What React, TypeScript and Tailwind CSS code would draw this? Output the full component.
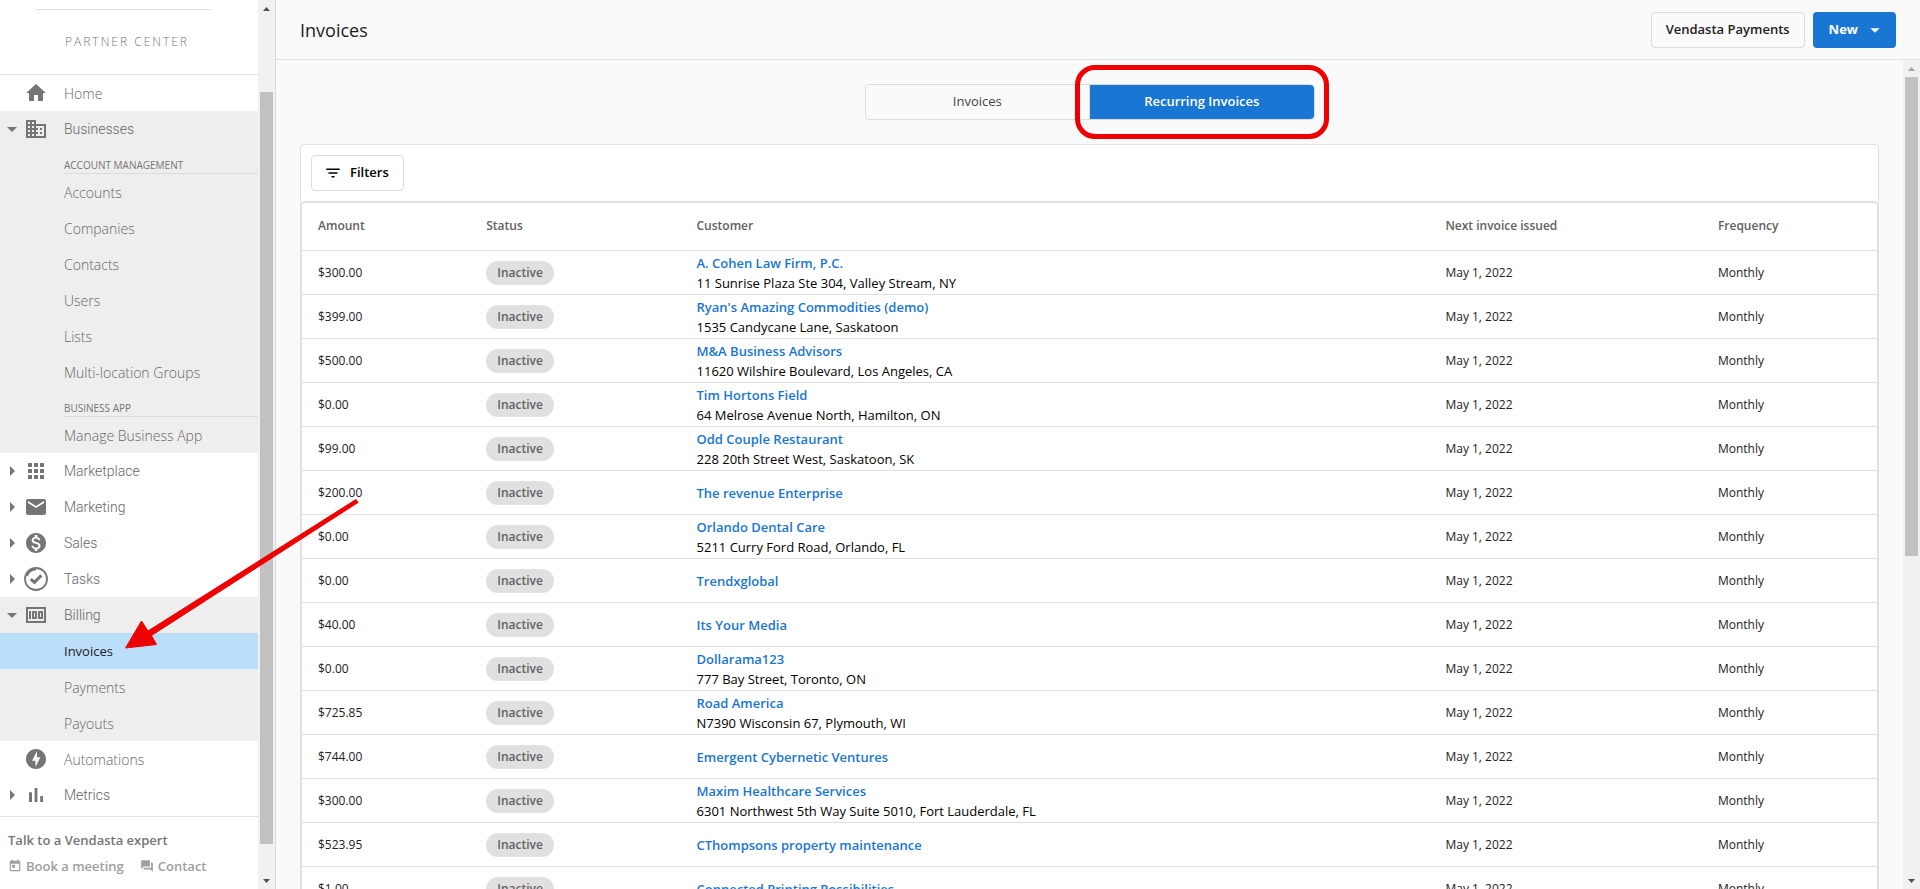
import type { ReactNode } from "react";
import {
  MdApps,
  MdArrowDropDown,
  MdArrowRight,
  MdDomain,
  MdFilterList,
  MdForum,
  MdHome,
  MdMail,
  MdMoney,
  MdMonetizationOn,
  MdOfflineBolt,
  MdToday,
} from "react-icons/md";

type Invoice = { amount: string; name: string; address?: string };

const invoices: Invoice[] = [
  { amount: "$300.00", name: "A. Cohen Law Firm, P.C.", address: "11 Sunrise Plaza Ste 304, Valley Stream, NY" },
  { amount: "$399.00", name: "Ryan's Amazing Commodities (demo)", address: "1535 Candycane Lane, Saskatoon" },
  { amount: "$500.00", name: "M&A Business Advisors", address: "11620 Wilshire Boulevard, Los Angeles, CA" },
  { amount: "$0.00", name: "Tim Hortons Field", address: "64 Melrose Avenue North, Hamilton, ON" },
  { amount: "$99.00", name: "Odd Couple Restaurant", address: "228 20th Street West, Saskatoon, SK" },
  { amount: "$200.00", name: "The revenue Enterprise" },
  { amount: "$0.00", name: "Orlando Dental Care", address: "5211 Curry Ford Road, Orlando, FL" },
  { amount: "$0.00", name: "Trendxglobal" },
  { amount: "$40.00", name: "Its Your Media" },
  { amount: "$0.00", name: "Dollarama123", address: "777 Bay Street, Toronto, ON" },
  { amount: "$725.85", name: "Road America", address: "N7390 Wisconsin 67, Plymouth, WI" },
  { amount: "$744.00", name: "Emergent Cybernetic Ventures" },
  { amount: "$300.00", name: "Maxim Healthcare Services", address: "6301 Northwest 5th Way Suite 5010, Fort Lauderdale, FL" },
  { amount: "$523.95", name: "CThompsons property maintenance" },
  { amount: "$1.00", name: "Connected Printing Possibilities" },
];

function TasksIcon() {
  return (
    <svg viewBox="0 0 24 24" className="size-6" fill="none" stroke="currentColor">
      <circle cx="12" cy="12" r="11" strokeWidth="1.8" />
      <path d="M12 2.6 A9.4 9.4 0 0 0 3 9" strokeWidth="2" />
      <path d="M6.8 12.2 L10.4 15.4 L17.4 8.4" strokeWidth="3" />
    </svg>
  );
}

function MetricsIcon() {
  return (
    <svg viewBox="0 0 24 24" className="size-6" fill="currentColor">
      <path d="M5 9.2h3V19H5zM10.6 5h2.8v14h-2.8zm5.6 8H19v6h-2.8z" />
    </svg>
  );
}

function NavGroup({ icon, label, open, plain }: { icon: ReactNode; label: string; open?: boolean; plain?: boolean }) {
  const body = (
    <>
      <span className="flex w-6 justify-center">
        {plain ? null : open ? <MdArrowDropDown className="size-6 shrink-0" /> : <MdArrowRight className="size-6 shrink-0" />}
      </span>
      <span className="flex size-6 items-center justify-center">{icon}</span>
    </>
  );
  if (plain) {
    return (
      <a href="#" className="flex h-9 items-center text-sm font-light">
        {body}
        <span className="pt-0.5 pl-4 text-[#666666]">{label}</span>
      </a>
    );
  }
  return (
    <button type="button" className="flex h-9 w-full items-center text-left font-[Roboto,sans-serif] text-sm font-light">
      {body}
      <span className="pl-4 text-[#666666]">{label}</span>
    </button>
  );
}

function SubItem({ label, active }: { label: string; active?: boolean }) {
  return (
    <a
      href="#"
      className={
        active
          ? "flex h-9 items-center bg-[#bbdefb] pt-0.5 pl-16 text-[13px] text-[#212121]"
          : "flex h-9 items-center pt-0.5 pl-16 text-sm font-light text-[#666666]"
      }
    >
      {label}
    </a>
  );
}

function SubHeading({ children }: { children: ReactNode }) {
  return (
    <h3 className="ml-16 flex h-[27px] items-end border-b border-[#dcdcdc] text-[10px] leading-4 uppercase">{children}</h3>
  );
}

function ScrollArrow({ down, muted }: { down?: boolean; muted?: boolean }) {
  return (
    <span className={muted ? "flex h-[17px] shrink-0 items-center text-[#a3a3a3]" : "flex h-[17px] shrink-0 items-center text-[#505050]"}>
      <svg viewBox="0 0 7 4" className="h-1 w-[7px]" fill="currentColor">
        <path d={down ? "M0 0H7L3.500 4z" : "M0 4H7L3.500 0z"} />
      </svg>
    </span>
  );
}

function Sidebar() {
  return (
    <aside className="flex h-full w-[276px] shrink-0 border-r border-[#dadada] bg-white text-[#757575]">
      <div className="flex min-w-0 flex-1 flex-col overflow-hidden">
        <div className="flex h-[75px] shrink-0 flex-col items-center border-b border-[#e0e0e0] pt-[9px] pr-3">
          <div className="w-[175px] border-t border-[#e0e0e0]" />
          <span className="pt-6 pl-2 text-xs leading-4 font-light tracking-[2px]">PARTNER CENTER</span>
        </div>
        <nav className="shrink-0">
          <NavGroup plain icon={<MdHome className="size-6" />} label="Home" />
          <div className="bg-[#eeeeee]">
            <NavGroup open icon={<MdDomain className="size-6" />} label="Businesses" />
            <SubHeading>Account Management</SubHeading>
            <SubItem label="Accounts" />
            <SubItem label="Companies" />
            <SubItem label="Contacts" />
            <SubItem label="Users" />
            <SubItem label="Lists" />
            <SubItem label="Multi-location Groups" />
            <SubHeading>Business App</SubHeading>
            <SubItem label="Manage Business App" />
          </div>
          <NavGroup icon={<MdApps className="size-6" />} label="Marketplace" />
          <NavGroup icon={<MdMail className="size-6" />} label="Marketing" />
          <NavGroup icon={<MdMonetizationOn className="size-6" />} label="Sales" />
          <NavGroup icon={<TasksIcon />} label="Tasks" />
          <div className="bg-[#eeeeee]">
            <NavGroup open icon={<MdMoney className="size-6" />} label="Billing" />
            <SubItem label="Invoices" active />
            <SubItem label="Payments" />
            <SubItem label="Payouts" />
          </div>
          <NavGroup plain icon={<MdOfflineBolt className="size-6" />} label="Automations" />
          <NavGroup icon={<MetricsIcon />} label="Metrics" />
        </nav>
        <footer className="mt-[3px] flex-1 border-t border-[#e0e0e0] px-2 pt-[13px] text-[13px] font-semibold">
          <p className="leading-5">Talk to a Vendasta expert</p>
          <div className="flex gap-4 pt-1.5 leading-5 text-[#9e9e9e]">
            <a href="#" className="flex items-center gap-1">
              <MdToday className="size-3.5" />
              Book a meeting
            </a>
            <a href="#" className="flex items-center gap-1">
              <MdForum className="size-3.5" />
              Contact
            </a>
          </div>
        </footer>
      </div>
      <div className="flex w-[17px] shrink-0 flex-col items-center bg-[#f1f1f1]">
        <ScrollArrow />
        <div className="flex min-h-0 flex-1 flex-col items-center pt-[75px] pb-7">
          <div className="w-[13px] flex-1 bg-[#c1c1c1]" />
        </div>
        <ScrollArrow down />
      </div>
    </aside>
  );
}

function InvoiceTable() {
  return (
    <table className="w-full table-fixed border-collapse text-left text-xs text-[#212121]">
      <colgroup>
        <col className="w-[11.7%]" />
        <col className="w-[13.35%]" />
        <col className="w-[47.55%]" />
        <col className="w-[17.3%]" />
        <col />
      </colgroup>
      <thead>
        <tr className="h-[47px] border-b border-[#e0e0e0] text-[#616161]">
          <th className="p-0 pl-4 font-semibold">Amount</th>
          <th className="p-0 font-semibold">Status</th>
          <th className="p-0 font-semibold">Customer</th>
          <th className="p-0 font-semibold">Next invoice issued</th>
          <th className="p-0 font-semibold">Frequency</th>
        </tr>
      </thead>
      <tbody>
        {invoices.map((invoice) => (
          <tr key={invoice.name} className="h-11 border-b border-[#e0e0e0]">
            <td className="p-0 pt-0.5 pl-4">{invoice.amount}</td>
            <td className="p-0 pt-0.5">
              <span className="inline-flex h-6 items-center rounded-full bg-[#e0e0e0] px-[11px] align-middle font-semibold text-[#616161]">
                Inactive
              </span>
            </td>
            <td className="p-0 pt-0.5 text-[13px] leading-5 text-black">
              <a href="#" className="font-semibold text-[#1976d2]">
                {invoice.name}
              </a>
              {invoice.address && <div>{invoice.address}</div>}
            </td>
            <td className="p-0 pt-0.5">May 1, 2022</td>
            <td className="p-0 pt-0.5">Monthly</td>
          </tr>
        ))}
      </tbody>
    </table>
  );
}

export default function App() {
  return (
    <div className="relative flex h-screen overflow-hidden bg-[#fafafa] font-['Open_Sans','Noto_Sans',sans-serif] text-[#212121]">
      <Sidebar />
      <div className="flex min-w-0 flex-1 flex-col">
        <header className="flex h-[60px] shrink-0 items-center gap-2 border-b border-[#e0e0e0] px-6">
          <h1 className="mr-auto text-lg">Invoices</h1>
          <button type="button" className="h-9 rounded border border-[#dcdcdc] px-3.5 text-[13px] font-semibold">
            Vendasta Payments
          </button>
          <button type="button" className="flex h-9 items-center gap-1.5 rounded bg-[#1976d2] pr-2.5 pl-4 text-[13px] font-bold text-white">
            New
            <MdArrowDropDown className="size-[22px]" />
          </button>
        </header>
        <div className="flex min-h-0 flex-1">
          <main className="min-w-0 flex-1 overflow-hidden px-6 pt-6">
            <div className="flex justify-center">
              <div className="flex h-9 w-[450px] rounded border border-[#dcdcdc] text-[13px]">
                <button type="button" className="flex-1 border-r border-[#dcdcdc] text-[#424242]">
                  Invoices
                </button>
                <div className="relative flex flex-1">
                  <button type="button" className="flex-1 rounded-r bg-[#1976d2] font-semibold text-white">
                    Recurring Invoices
                  </button>
                  <div className="pointer-events-none absolute -inset-x-[15px] -inset-y-5 rounded-[20px] border-5 border-[#ee0000]" />
                </div>
              </div>
            </div>
            <section className="mt-6 rounded border border-[#e0e0e0] bg-white">
              <div className="p-2.5">
                <button type="button" className="flex h-9 items-center gap-2 rounded border border-[#dcdcdc] pr-3.5 pl-3 text-[13px] font-semibold text-black">
                  <MdFilterList className="size-[18px]" />
                  Filters
                </button>
              </div>
              <div className="rounded border border-t-2 border-[#e0e0e0]">
                <InvoiceTable />
              </div>
            </section>
          </main>
          <div className="flex w-[17px] shrink-0 flex-col items-center bg-[#f1f1f1]">
            <ScrollArrow muted />
            <div className="flex min-h-0 w-[13px] flex-1 flex-col">
              <div className="h-[60.2%] bg-[#c1c1c1]" />
            </div>
            <ScrollArrow down />
          </div>
        </div>
      </div>
      <svg viewBox="0 0 234 150" className="pointer-events-none absolute top-[499px] left-[125px] h-[150px] w-[234px]" fill="#ee0000">
        <path d="M231 0.500 L233 3.500 L26.500 136.500 L31.500 145.500 L0.500 149 L16.500 122 L23 132 Z" stroke="#ee0000" strokeWidth="1" />
      </svg>
    </div>
  );
}
